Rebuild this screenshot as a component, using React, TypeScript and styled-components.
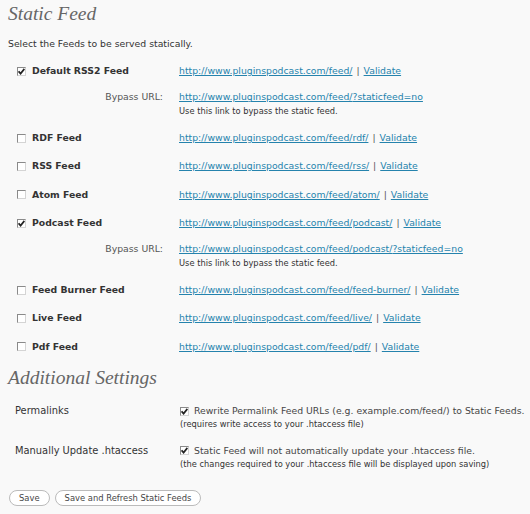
import { Fragment } from 'react';
import styled, { createGlobalStyle } from 'styled-components';

const GlobalStyle = createGlobalStyle`
  body {
    margin: 0;
    background: #f9f9f9;
    color: #333;
    font-family: "DejaVu Sans", Verdana, sans-serif;
  }
`;

const Page = styled.div`
  padding: 0 8px;
`;

const Heading = styled.h2<{ $top?: number }>`
  margin: ${(p) => p.$top || 0}px 0 0;
  font-family: "Liberation Serif", "Times New Roman", serif;
  font-style: italic;
  font-weight: normal;
  font-size: 19.5px;
  line-height: 28px;
  color: #666;
`;

const Intro = styled.p`
  margin: 9px 0 0;
  font-size: 9.3px;
  line-height: 14px;
  color: #333;
`;

const FeedTable = styled.div`
  margin-top: 6px;
`;

const Row = styled.div<{ $bypass?: boolean }>`
  display: grid;
  grid-template-columns: 171px 1fr;
  padding: ${(p) => (p.$bypass ? '5px 0 7px' : '7px 0')};
  font-size: 9.3px;
  line-height: 14.4px;
`;

const LabelCell = styled.div`
  display: flex;
  align-items: center;
  gap: 6px;
  padding-left: 9px;
  font-weight: bold;
  color: #333;
`;

const BypassLabel = styled.div`
  text-align: right;
  padding-right: 16px;
  color: #555;
`;

const Link = styled.a`
  color: #2583ad;
  text-decoration: underline;
`;

const Sep = styled.span`
  color: #555;
  margin: 0 4px;
`;

const Note = styled.div`
  font-size: 8.3px;
  line-height: 12px;
  color: #333;
`;

const Box = styled.span`
  display: inline-flex;
  align-items: center;
  justify-content: center;
  flex: none;
  width: 9px;
  height: 9px;
  box-sizing: border-box;
  background: #fff;
  border: 1px solid;
  border-color: #8a8a8a #d4d4d4 #d4d4d4 #8a8a8a;
`;

const Settings = styled.div`
  margin-top: 6px;
`;

const SettingRow = styled.div`
  display: grid;
  grid-template-columns: 172px 1fr;
  padding: 6px 0 6.5px;
`;

const SettingLabel = styled.div`
  padding-left: 7px;
  font-size: 9.9px;
  line-height: 14px;
  color: #333;
`;

const CheckLine = styled.div`
  display: flex;
  align-items: center;
  gap: 5px;
  font-size: 9.3px;
  line-height: 14px;
  white-space: nowrap;
  color: #464646;
`;

const SettingNote = styled.div`
  font-size: 8.3px;
  line-height: 13px;
  white-space: nowrap;
  color: #333;
`;

const Buttons = styled.div`
  display: flex;
  gap: 5px;
  margin-top: 13px;
  padding-left: 1px;
`;

const Button = styled.button`
  height: 16px;
  padding: 0 9px;
  border: 1px solid #bbb;
  border-radius: 8px;
  background: #fff;
  color: #464646;
  font-family: "DejaVu Sans", Verdana, sans-serif;
  font-size: 8.4px;
  line-height: 14px;
  cursor: pointer;
`;

const Checkbox = ({ checked }: { checked: boolean }) => (
  <Box>
    {checked && (
      <svg width="7" height="7" viewBox="0 0 7 7">
        <path d="M0.6 3.3 L2.6 5.6 L6.4 0.9" fill="none" stroke="#222" strokeWidth="1.7" />
      </svg>
    )}
  </Box>
);

type Feed = { name: string; path: string; checked: boolean; bypass?: boolean };

const feeds: Feed[] = [
  { name: 'Default RSS2 Feed', path: '', checked: true, bypass: true },
  { name: 'RDF Feed', path: 'rdf/', checked: false },
  { name: 'RSS Feed', path: 'rss/', checked: false },
  { name: 'Atom Feed', path: 'atom/', checked: false },
  { name: 'Podcast Feed', path: 'podcast/', checked: true, bypass: true },
  { name: 'Feed Burner Feed', path: 'feed-burner/', checked: false },
  { name: 'Live Feed', path: 'live/', checked: false },
  { name: 'Pdf Feed', path: 'pdf/', checked: false },
];

const base = 'http://www.pluginspodcast.com/feed/';

const App = () => {
  return (
    <>
      <GlobalStyle />
      <Page>
        <Heading>Static Feed</Heading>
        <Intro>Select the Feeds to be served statically.</Intro>
        <FeedTable>
          {feeds.map((feed) => (
            <Fragment key={feed.name}>
              <Row>
                <LabelCell>
                  <Checkbox checked={feed.checked} />
                  {feed.name}
                </LabelCell>
                <div>
                  <Link href="#">{base + feed.path}</Link>
                  <Sep>|</Sep>
                  <Link href="#">Validate</Link>
                </div>
              </Row>
              {feed.bypass && (
                <Row $bypass>
                  <BypassLabel>Bypass URL:</BypassLabel>
                  <div>
                    <Link href="#">{base + feed.path}?staticfeed=no</Link>
                    <Note>Use this link to bypass the static feed.</Note>
                  </div>
                </Row>
              )}
            </Fragment>
          ))}
        </FeedTable>

        <Heading $top={3}>Additional Settings</Heading>
        <Settings>
          <SettingRow>
            <SettingLabel>Permalinks</SettingLabel>
            <div>
              <CheckLine>
                <Checkbox checked />
                Rewrite Permalink Feed URLs (e.g. example.com/feed/) to Static Feeds.
              </CheckLine>
              <SettingNote>(requires write access to your .htaccess file)</SettingNote>
            </div>
          </SettingRow>
          <SettingRow>
            <SettingLabel>Manually Update .htaccess</SettingLabel>
            <div>
              <CheckLine>
                <Checkbox checked />
                Static Feed will not automatically update your .htaccess file.
              </CheckLine>
              <SettingNote>(the changes required to your .htaccess file will be displayed upon saving)</SettingNote>
            </div>
          </SettingRow>
        </Settings>
        <Buttons>
          <Button>Save</Button>
          <Button>Save and Refresh Static Feeds</Button>
        </Buttons>
      </Page>
    </>
  );
};

export default App;
